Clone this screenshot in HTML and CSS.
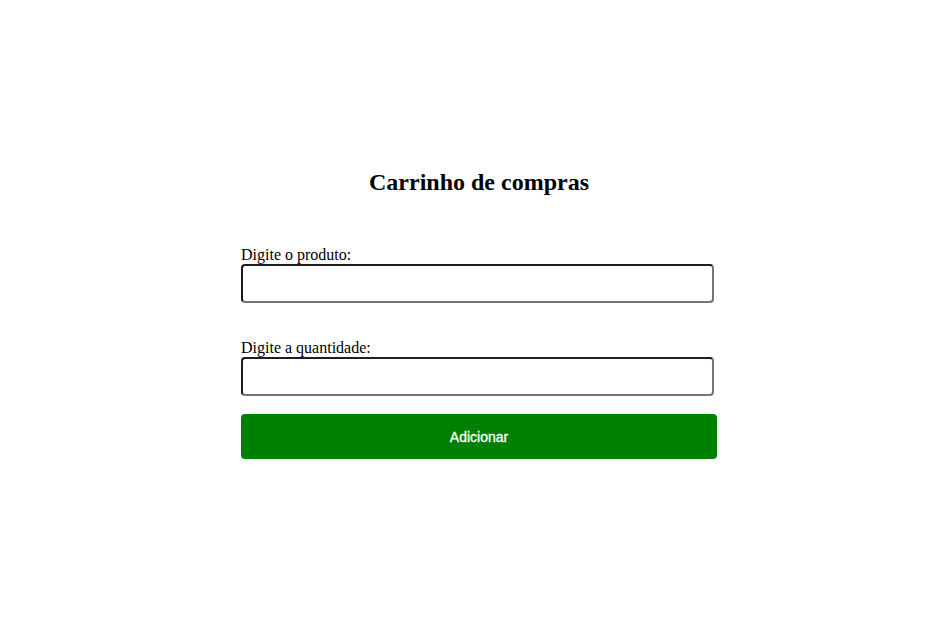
FILE: index.html
```html
<!DOCTYPE html>
<html lang="pt-BR">
<head>
<meta charset="utf-8">
<title>Carrinho de compras</title>
<link rel="stylesheet" href="styles.css">
</head>
<body>
<main class="page">
  <section class="cart">
    <h2 class="title">Carrinho de compras</h2>
    <form class="form">
      <div class="field">
        <label class="label" for="produto">Digite o produto:</label>
        <input class="input" id="produto" type="text">
      </div>
      <div class="field">
        <label class="label" for="quantidade">Digite a quantidade:</label>
        <input class="input" id="quantidade" type="text">
      </div>
      <button class="btn" type="button">Adicionar</button>
    </form>
  </section>
</main>
</body>
</html>
```
FILE: styles.css
```css
html, body {
  margin: 0;
  padding: 0;
  background: #fff;
}
body {
  font-family: "Liberation Serif", "Times New Roman", serif;
  color: #000;
}
.page {
  display: flex;
  justify-content: center;
  padding-top: 169px;
}
.cart {
  width: 476px;
  padding-left: 30px;
}
.title {
  margin: 0;
  font-size: 24px;
  font-weight: bold;
  text-align: center;
  line-height: 27px;
}
.form {
  display: flex;
  flex-direction: column;
  margin-top: 50px;
}
.field {
  display: flex;
  flex-direction: column;
  align-items: flex-start;
  margin-bottom: 36px;
}
.field:nth-child(2) {
  margin-bottom: 18px;
}
.label {
  font-size: 16px;
  line-height: 18px;
}
.input {
  box-sizing: border-box;
  width: 473px;
  height: 39px;
  margin: 0;
  border-width: 2px;
  border-style: solid;
  border-color: #1e1e1e #767676 #767676 #1e1e1e;
  border-radius: 4px;
  background: #fff;
  font-size: 16px;
}
.btn {
  box-sizing: border-box;
  width: 476px;
  height: 45px;
  border: none;
  border-radius: 4px;
  background: #008000;
  color: #fff;
  font-family: "Liberation Sans", Arial, sans-serif;
  font-size: 14px;
  cursor: pointer;
  -webkit-text-stroke: 0.3px #fff;
}
```
